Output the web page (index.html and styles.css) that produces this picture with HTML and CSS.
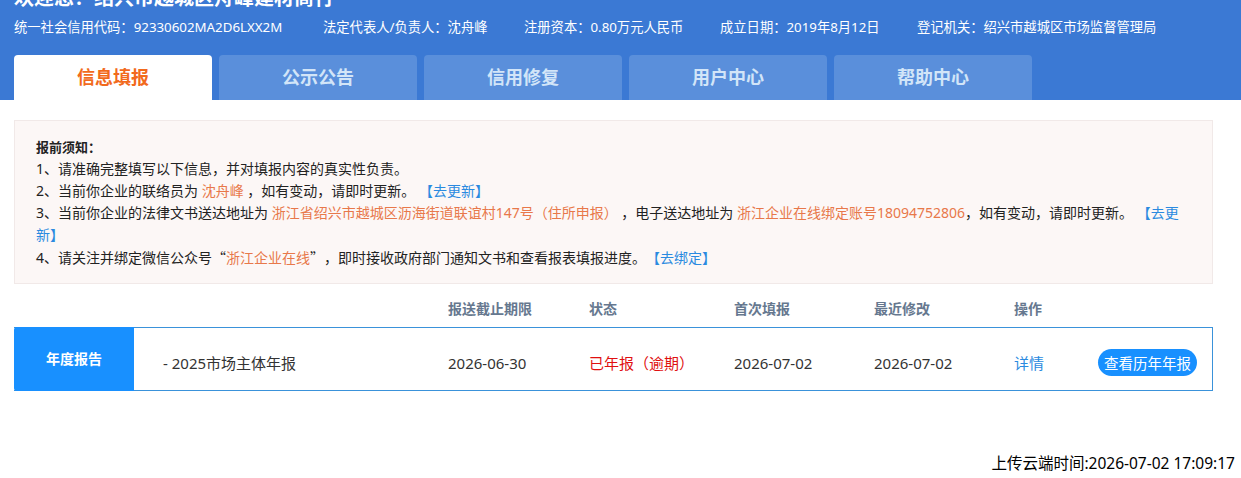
FILE: index.html
```html
<!DOCTYPE html>
<html lang="zh-CN">
<head>
  <meta charset="UTF-8">
  <meta name="viewport" content="width=device-width, initial-scale=1.0">
  <title>企业信息填报</title>
  <link rel="stylesheet" href="styles.css">
</head>
<body>
  <div class="header">
    <h1 class="welcome">欢迎您！绍兴市越城区舟峰建材商行</h1>
    <div class="info-line">
      <span class="info-item w1">统一社会信用代码：92330602MA2D6LXX2M</span>
      <span class="info-item w2">法定代表人/负责人：沈舟峰</span>
      <span class="info-item w3">注册资本：0.80万元人民币</span>
      <span class="info-item w4">成立日期：2019年8月12日</span>
      <span class="info-item">登记机关：绍兴市越城区市场监督管理局</span>
    </div>
    <div class="tabs">
      <div class="tab active">信息填报</div>
      <div class="tab">公示公告</div>
      <div class="tab">信用修复</div>
      <div class="tab">用户中心</div>
      <div class="tab">帮助中心</div>
    </div>
  </div>

  <div class="container">
    <div class="notice">
      <p class="notice-title">报前须知：</p>
      <p>1、请准确完整填写以下信息，并对填报内容的真实性负责。</p>
      <p>2、当前你企业的联络员为 <span class="hl">沈舟峰</span> ，如有变动，请即时更新。 <a class="link">【去更新】</a></p>
      <p>3、当前你企业的法律文书送达地址为 <span class="hl">浙江省绍兴市越城区沥海街道联谊村147号（住所申报）</span> ，电子送达地址为 <span class="hl">浙江企业在线绑定账号18094752806</span>，如有变动，请即时更新。 <a class="link">【去更新】</a></p>
      <p>4、请关注并绑定微信公众号<span class="cjk">“</span><span class="hl">浙江企业在线</span><span class="cjk">”</span>，即时接收政府部门通知文书和查看报表填报进度。<a class="link">【去绑定】</a></p>
    </div>

    <div class="report-head">
      <span></span>
      <span></span>
      <span>报送截止期限</span>
      <span>状态</span>
      <span>首次填报</span>
      <span>最近修改</span>
      <span>操作</span>
    </div>

    <div class="report-row">
      <div class="report-label">年度报告</div>
      <div class="cell">- 2025市场主体年报</div>
      <div class="cell">2026-06-30</div>
      <div class="cell status">已年报（逾期）</div>
      <div class="cell">2026-07-02</div>
      <div class="cell">2026-07-02</div>
      <div class="cell actions">
        <a class="link">详情</a>
        <button class="history-btn">查看历年年报</button>
      </div>
    </div>

    <div class="upload-time">上传云端时间:2026-07-02 17:09:17</div>
  </div>
</body>
</html>
```

FILE: styles.css
```css
body {
  font-family: "Noto Sans", "Noto Sans CJK SC", sans-serif;
  margin: 0;
  padding: 0;
  background: #ffffff;
  color: #333333;
  overflow: hidden;
  text-spacing-trim: space-all;
}
p {
  margin: 0;
}
.header {
  background: #3b79d4;
  padding: 0 14px;
  color: #ffffff;
}
.welcome {
  margin: -16px 0 0;
  font-size: 20px;
  line-height: 28px;
  font-weight: bold;
}
.info-line {
  display: flex;
  font-size: 13.3px;
  line-height: 20px;
  margin-top: 5px;
}
.info-item.w1 {
  width: 309px;
}
.info-item.w2 {
  width: 201px;
}
.info-item.w3 {
  width: 196px;
}
.info-item.w4 {
  width: 197px;
}
.tabs {
  display: flex;
  gap: 7px;
  margin-top: 18px;
}
.tab {
  width: 198px;
  height: 45px;
  line-height: 45px;
  text-align: center;
  background: #5a8fdb;
  color: #d2e5f8;
  font-size: 18px;
  font-weight: bold;
  border-radius: 4px 4px 0 0;
}
.tab.active {
  background: #ffffff;
  color: #f26a1c;
}
.container {
  width: 1199px;
  padding: 0 14px;
}
.notice {
  margin-top: 20px;
  background: #fcf7f6;
  border: 1px solid #f1e9e8;
  padding: 15px 22px 14px 21px;
  font-size: 14px;
  line-height: 22px;
  color: #222222;
}
.notice-title {
  font-weight: bold;
  font-size: 13px;
}
.cjk {
  font-family: "Noto Sans CJK SC", sans-serif;
}
.hl {
  color: #e8784a;
}
.link {
  color: #2a8ae0;
  cursor: pointer;
}
.report-head,
.report-row {
  display: grid;
  grid-template-columns: 120px 314px 141px 145px 140px 140px 1fr;
}
.report-head {
  padding: 15px 0 8px;
  font-size: 14px;
  line-height: 20px;
  font-weight: bold;
  color: #66788f;
}
.report-row {
  height: 64px;
  box-sizing: border-box;
  border: 1px solid #3a92da;
  border-left: none;
  font-size: 15px;
}
.report-label {
  display: flex;
  align-items: center;
  justify-content: center;
  background: #1890ff;
  color: #ffffff;
  font-size: 14px;
  font-weight: bold;
  margin: -1px 0;
  border-radius: 3px 0 0 3px;
  padding-bottom: 2px;
}
.cell {
  display: flex;
  align-items: center;
  padding-top: 7px;
  color: #333333;
}
.report-row .cell:nth-child(2) {
  padding-left: 29px;
}
.status {
  color: #e01010;
}
.actions {
  padding-right: 15px;
}
.history-btn {
  margin-left: auto;
  background: #1890ff;
  color: #ffffff;
  border: none;
  border-radius: 14px;
  height: 27px;
  padding: 0 6px;
  font-family: inherit;
  font-size: 14.5px;
  cursor: pointer;
}
.upload-time {
  margin-top: 62px;
  margin-right: -22px;
  text-align: right;
  font-size: 15.5px;
  line-height: 20px;
  color: #000000;
}
```
